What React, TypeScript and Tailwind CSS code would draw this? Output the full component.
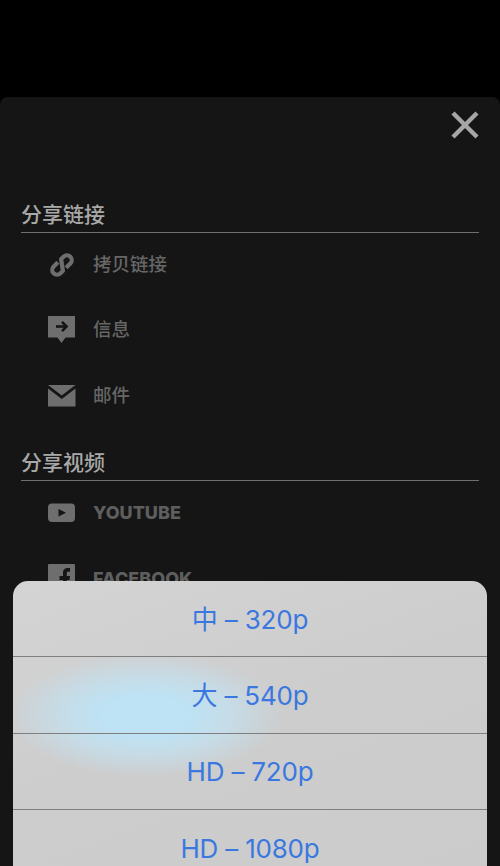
import React from 'react';

const cjk = 'font-["Inter","Noto_Sans_CJK_SC",sans-serif]';

function LinkIcon() {
  return (
    <svg width="28" height="28" viewBox="0 0 28 28" fill="none" stroke="#6e6e6e" strokeWidth="4.2" strokeLinejoin="round">
      <g transform="rotate(45 14 14)">
        <path d="M18.8 13V7a4.8 4.8 0 0 0-9.6 0V10.5L18.8 17.5V21a4.8 4.8 0 0 1-9.6 0V15" />
      </g>
    </svg>
  );
}

function MessageIcon() {
  return (
    <svg width="28" height="28" viewBox="0 0 28 28">
      <path d="M0 0H27V21.5H17.5L13.5 27L9.5 21.5H0Z" fill="#6e6e6e" />
      <path d="M8 10.5H17.5" stroke="#151515" strokeWidth="2.6" />
      <path d="M14 5.8L18.6 10.5L14 15.2" stroke="#151515" strokeWidth="2.6" fill="none" />
    </svg>
  );
}

function MailIcon() {
  return (
    <svg width="28" height="22" viewBox="0 0 28 22">
      <path d="M0 0H27.5L13.75 10.5Z" fill="#6e6e6e" />
      <path d="M0 3.5L13.75 14L27.5 3.5V21.5H0Z" fill="#6e6e6e" />
    </svg>
  );
}

function YoutubeIcon() {
  return (
    <svg width="28" height="20" viewBox="0 0 28 20">
      <rect x="0" y="0.5" width="27" height="18.5" rx="4" fill="#6e6e6e" />
      <path d="M10.5 6L18 9.8L10.5 13.5Z" fill="#151515" />
    </svg>
  );
}

function FacebookIcon() {
  return (
    <svg width="28" height="28" viewBox="0 0 28 28">
      <rect x="0" y="0" width="27" height="27" rx="1" fill="#6e6e6e" />
      <path d="M15 27V16H11.5V12H15V8.5C15 5.5 17 4 19.5 4H22V7.8H20.2C19 7.8 18.8 8.4 18.8 9.4V12H22L21.5 16H18.8V27Z" fill="#151515" />
    </svg>
  );
}

const linkRows = [
  { label: '拷贝链接', icon: <LinkIcon /> },
  { label: '信息', icon: <MessageIcon /> },
  { label: '邮件', icon: <MailIcon /> },
];

const sizes = ['中 – 320p', '大 – 540p', 'HD – 720p', 'HD – 1080p'];

function ShareRow({ icon, label, latin }: { icon: React.ReactNode; label: string; latin?: boolean }) {
  return (
    <div className="flex h-[65.5px] items-center pl-[27px]">
      <div className="flex w-[45px] items-center">{icon}</div>
      <span
        className={
          latin
            ? 'font-["Inter",sans-serif] text-[18px] font-extrabold text-[#5e5e5e]'
            : 'pb-[2px] font-["Noto_Sans_CJK_SC",sans-serif] text-[18.5px] font-medium text-[#666666]'
        }
      >
        {label}
      </span>
    </div>
  );
}

function SectionTitle({ children }: { children: React.ReactNode }) {
  return (
    <div className='border-b border-[#707070] pb-[4.5px] font-["Noto_Sans_CJK_SC",sans-serif] text-[21px] leading-[30px] font-medium text-[#a8a8a8]'>
      {children}
    </div>
  );
}

export default function App() {
  return (
    <div className="relative h-[866px] w-[500px] overflow-hidden bg-black pt-[97px]">
      {/* Share panel */}
      <div className="h-full rounded-t-lg bg-[#151515] px-[21px]">
        <div className="flex justify-end pt-[14px] pb-[58.5px]">
          <svg width="28" height="28" viewBox="0 0 28 28" stroke="#a6a6a6" strokeWidth="4.4">
            <path d="M2 2L26 26M26 2L2 26" />
          </svg>
        </div>
        <SectionTitle>分享链接</SectionTitle>
        <div className="mt-[-1px]">
          {linkRows.map((r) => (
            <ShareRow key={r.label} icon={r.icon} label={r.label} />
          ))}
        </div>
        <div className="pt-[17px]">
          <SectionTitle>分享视频</SectionTitle>
        </div>
        <div className="mt-[-1px]">
          <ShareRow icon={<YoutubeIcon />} label="YOUTUBE" latin />
          <ShareRow icon={<FacebookIcon />} label="FACEBOOK" latin />
        </div>
      </div>

      {/* Quality action sheet */}
      <div className="absolute top-[581px] right-[13px] bottom-[-40px] left-[13px] overflow-hidden rounded-[15px] bg-[linear-gradient(160deg,#d4d4d4,#cdcdcd_45%,#cbcbcb)]">
        <div className="absolute top-[72px] left-[-5px] h-[124px] w-[275px] bg-[radial-gradient(ellipse_closest-side,#bde3f5_30%,#c6dce7_62%,#cfcfcf00_100%)]" />
        <div className="relative">
          {sizes.map((s, i) => (
            <div
              key={s}
              className={`flex h-[76.4px] items-center justify-center pt-[1px] text-[26px] tracking-[-0.2px] text-[#3a78e0] ${cjk} ${
                i < 3 ? 'border-b border-[#7f7f7f]' : ''
              }`}
            >
              {s}
            </div>
          ))}
        </div>
      </div>
    </div>
  );
}
